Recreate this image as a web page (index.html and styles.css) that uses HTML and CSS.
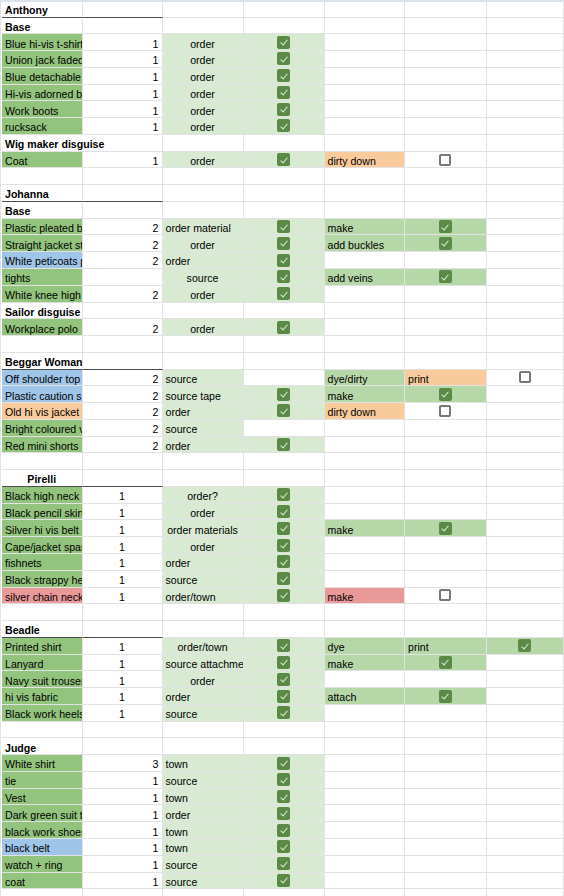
FILE: index.html
```html
<!DOCTYPE html>
<html lang="en">
<head>
  <meta charset="UTF-8" />
  <meta name="viewport" content="width=device-width, initial-scale=1.0" />
  <title>Costume list</title>
  <link rel="stylesheet" href="styles.css">
</head>

<body>
  <div class="sheet">
    <!-- Anthony -->
    <div class="row top"><span class="b hd">Anthony</span><span class="hd"></span><span></span><span></span><span></span><span></span><span></span></div>
    <div class="row"><span class="b">Base</span><span></span><span></span><span></span><span></span><span></span><span></span></div>
    <div class="row"><span class="g1">Blue hi-vis t-shirt</span><span class="r">1</span><span class="g2 c">order</span><span class="g2 ck"><b class="box on"></b></span><span></span><span></span><span></span></div>
    <div class="row"><span class="g1">Union jack faded</span><span class="r">1</span><span class="g2 c">order</span><span class="g2 ck"><b class="box on"></b></span><span></span><span></span><span></span></div>
    <div class="row"><span class="g1">Blue detachable</span><span class="r">1</span><span class="g2 c">order</span><span class="g2 ck"><b class="box on"></b></span><span></span><span></span><span></span></div>
    <div class="row"><span class="g1">Hi-vis adorned b</span><span class="r">1</span><span class="g2 c">order</span><span class="g2 ck"><b class="box on"></b></span><span></span><span></span><span></span></div>
    <div class="row"><span class="g1">Work boots</span><span class="r">1</span><span class="g2 c">order</span><span class="g2 ck"><b class="box on"></b></span><span></span><span></span><span></span></div>
    <div class="row"><span class="g1">rucksack</span><span class="r">1</span><span class="g2 c">order</span><span class="g2 ck"><b class="box on"></b></span><span></span><span></span><span></span></div>
    <div class="row"><span class="b w2">Wig maker disguise</span><span></span><span></span><span></span><span></span><span></span></div>
    <div class="row"><span class="g1">Coat</span><span class="r">1</span><span class="g2 c">order</span><span class="g2 ck"><b class="box on"></b></span><span class="or">dirty down</span><span class="ck"><b class="box"></b></span><span></span></div>
    <div class="row"><span></span><span></span><span></span><span></span><span></span><span></span><span></span></div>

    <!-- Johanna -->
    <div class="row"><span class="b hd">Johanna</span><span class="hd"></span><span></span><span></span><span></span><span></span><span></span></div>
    <div class="row"><span class="b">Base</span><span></span><span></span><span></span><span></span><span></span><span></span></div>
    <div class="row"><span class="g1">Plastic pleated b</span><span class="r">2</span><span class="g2">order material</span><span class="g2 ck"><b class="box on"></b></span><span class="g3">make</span><span class="g3 ck"><b class="box on"></b></span><span></span></div>
    <div class="row"><span class="g1">Straight jacket st</span><span class="r">2</span><span class="g2 c">order</span><span class="g2 ck"><b class="box on"></b></span><span class="g3">add buckles</span><span class="g3 ck"><b class="box on"></b></span><span></span></div>
    <div class="row"><span class="bl">White peticoats p</span><span class="r">2</span><span class="g2">order</span><span class="g2 ck"><b class="box on"></b></span><span></span><span></span><span></span></div>
    <div class="row"><span class="g1">tights</span><span></span><span class="g2 c">source</span><span class="g2 ck"><b class="box on"></b></span><span class="g3">add veins</span><span class="g3 ck"><b class="box on"></b></span><span></span></div>
    <div class="row"><span class="g1">White knee high</span><span class="r">2</span><span class="g2 c">order</span><span class="g2 ck"><b class="box on"></b></span><span></span><span></span><span></span></div>
    <div class="row"><span class="b">Sailor disguise</span><span></span><span></span><span></span><span></span><span></span><span></span></div>
    <div class="row"><span class="g1">Workplace polo</span><span class="r">2</span><span class="g2 c">order</span><span class="g2 ck"><b class="box on"></b></span><span></span><span></span><span></span></div>
    <div class="row"><span></span><span></span><span></span><span></span><span></span><span></span><span></span></div>

    <!-- Beggar Woman -->
    <div class="row"><span class="b hd">Beggar Woman</span><span class="hd"></span><span></span><span></span><span></span><span></span><span></span></div>
    <div class="row"><span class="bl">Off shoulder top</span><span class="r">2</span><span class="g2">source</span><span></span><span class="g3">dye/dirty</span><span class="or">print</span><span class="ck"><b class="box"></b></span></div>
    <div class="row"><span class="bl">Plastic caution s</span><span class="r">2</span><span class="g2">source tape</span><span class="g2 ck"><b class="box on"></b></span><span class="g3">make</span><span class="g3 ck"><b class="box on"></b></span><span></span></div>
    <div class="row"><span class="or">Old hi vis jacket</span><span class="r">2</span><span class="g2">order</span><span class="g2 ck"><b class="box on"></b></span><span class="or">dirty down</span><span class="ck"><b class="box"></b></span><span></span></div>
    <div class="row"><span class="g1">Bright coloured v</span><span class="r">2</span><span class="g2">source</span><span></span><span></span><span></span><span></span></div>
    <div class="row"><span class="g1">Red mini shorts</span><span class="r">2</span><span class="g2">order</span><span class="g2 ck"><b class="box on"></b></span><span></span><span></span><span></span></div>
    <div class="row"><span></span><span></span><span></span><span></span><span></span><span></span><span></span></div>

    <!-- Pirelli -->
    <div class="row"><span class="b c hd">Pirelli</span><span class="hd"></span><span></span><span></span><span></span><span></span><span></span></div>
    <div class="row"><span class="g1">Black high neck</span><span class="c">1</span><span class="g2 c">order?</span><span class="g2 ck"><b class="box on"></b></span><span></span><span></span><span></span></div>
    <div class="row"><span class="g1">Black pencil skirt</span><span class="c">1</span><span class="g2 c">order</span><span class="g2 ck"><b class="box on"></b></span><span></span><span></span><span></span></div>
    <div class="row"><span class="g1">Silver hi vis belt</span><span class="c">1</span><span class="g2 c">order materials</span><span class="g2 ck"><b class="box on"></b></span><span class="g3">make</span><span class="g3 ck"><b class="box on"></b></span><span></span></div>
    <div class="row"><span class="g1">Cape/jacket spare</span><span class="c">1</span><span class="g2 c">order</span><span class="g2 ck"><b class="box on"></b></span><span></span><span></span><span></span></div>
    <div class="row"><span class="g1">fishnets</span><span class="c">1</span><span class="g2">order</span><span class="g2 ck"><b class="box on"></b></span><span></span><span></span><span></span></div>
    <div class="row"><span class="g1">Black strappy heels</span><span class="c">1</span><span class="g2">source</span><span class="g2 ck"><b class="box on"></b></span><span></span><span></span><span></span></div>
    <div class="row"><span class="rd">silver chain necklace</span><span class="c">1</span><span class="g2">order/town</span><span class="g2 ck"><b class="box on"></b></span><span class="rd">make</span><span class="ck"><b class="box"></b></span><span></span></div>
    <div class="row"><span></span><span></span><span></span><span></span><span></span><span></span><span></span></div>

    <!-- Beadle -->
    <div class="row"><span class="b hd">Beadle</span><span class="hd"></span><span></span><span></span><span></span><span></span><span></span></div>
    <div class="row"><span class="g1">Printed shirt</span><span class="c">1</span><span class="g2 c">order/town</span><span class="g2 ck"><b class="box on"></b></span><span class="g3">dye</span><span class="g3">print</span><span class="g3 ck"><b class="box on"></b></span></div>
    <div class="row"><span class="g1">Lanyard</span><span class="c">1</span><span class="g2">source attachment</span><span class="g2 ck"><b class="box on"></b></span><span class="g3">make</span><span class="g3 ck"><b class="box on"></b></span><span></span></div>
    <div class="row"><span class="g1">Navy suit trousers</span><span class="c">1</span><span class="g2 c">order</span><span class="g2 ck"><b class="box on"></b></span><span></span><span></span><span></span></div>
    <div class="row"><span class="g1">hi vis fabric</span><span class="c">1</span><span class="g2">order</span><span class="g2 ck"><b class="box on"></b></span><span class="g3">attach</span><span class="g3 ck"><b class="box on"></b></span><span></span></div>
    <div class="row"><span class="g1">Black work heels</span><span class="c">1</span><span class="g2">source</span><span class="g2 ck"><b class="box on"></b></span><span></span><span></span><span></span></div>
    <div class="row"><span></span><span></span><span></span><span></span><span></span><span></span><span></span></div>

    <!-- Judge -->
    <div class="row"><span class="b">Judge</span><span></span><span></span><span></span><span></span><span></span><span></span></div>
    <div class="row"><span class="g1">White shirt</span><span class="r">3</span><span class="g2">town</span><span class="g2 ck"><b class="box on"></b></span><span></span><span></span><span></span></div>
    <div class="row"><span class="g1">tie</span><span class="r">1</span><span class="g2">source</span><span class="g2 ck"><b class="box on"></b></span><span></span><span></span><span></span></div>
    <div class="row"><span class="g1">Vest</span><span class="r">1</span><span class="g2">town</span><span class="g2 ck"><b class="box on"></b></span><span></span><span></span><span></span></div>
    <div class="row"><span class="g1">Dark green suit trousers</span><span class="r">1</span><span class="g2">order</span><span class="g2 ck"><b class="box on"></b></span><span></span><span></span><span></span></div>
    <div class="row"><span class="g1">black work shoes</span><span class="r">1</span><span class="g2">town</span><span class="g2 ck"><b class="box on"></b></span><span></span><span></span><span></span></div>
    <div class="row"><span class="bl">black belt</span><span class="r">1</span><span class="g2">town</span><span class="g2 ck"><b class="box on"></b></span><span></span><span></span><span></span></div>
    <div class="row"><span class="g1">watch + ring</span><span class="r">1</span><span class="g2">source</span><span class="g2 ck"><b class="box on"></b></span><span></span><span></span><span></span></div>
    <div class="row"><span class="g1">coat</span><span class="r">1</span><span class="g2">source</span><span class="g2 ck"><b class="box on"></b></span><span></span><span></span><span></span></div>
    <div class="row"><span></span><span></span><span></span><span></span><span></span><span></span><span></span></div>
  </div>
</body>
</html>
```

FILE: styles.css
```css
* {
  box-sizing: border-box;
}

body {
  margin: 0;
  background: #fff;
  color: #000;
  font-family: "Liberation Sans", Arial, sans-serif;
  font-size: 10.6px;
  overflow: hidden;
}

.sheet {
  border-top: 2px solid #dde3ea;
  border-left: 1px solid #e2e2e2;
  padding-left: 1px;
}

.row {
  display: grid;
  grid-template-columns: 80.5px 80px 81px 81px 80.5px 81.5px 1fr;
  height: 16.77px;
}

.row.top {
  height: 15.5px;
}

.row > span {
  display: flex;
  align-items: flex-end;
  min-width: 0;
  padding: 0 3px 0.5px;
  line-height: 12px;
  white-space: nowrap;
  overflow: hidden;
  border-right: 1px solid #e2e2e2;
  border-bottom: 1px solid #e2e2e2;
}

.row > span.b {
  font-weight: bold;
}

.row > span.r {
  justify-content: flex-end;
}

.row > span.c {
  justify-content: center;
}

.row > span.w2 {
  grid-column: span 2;
}

.row > span.hd {
  border-bottom-color: #4a4a4a;
}

/* cell fills */
.g1 { background: #93c47d; }
.g2 { background: #d9ead3; }
.g3 { background: #b6d7a8; }
.bl { background: #9fc5e8; }
.or { background: #f9cb9c; }
.rd { background: #ea9999; }

/* checkboxes */
.row > span.ck {
  justify-content: center;
  align-items: center;
  padding: 0;
}

.box {
  display: block;
  width: 12px;
  height: 12px;
  border: 2px solid #777;
  border-radius: 2px;
  background: #fff;
}

.box.on {
  width: 13px;
  height: 13px;
  border: none;
  background: #5b8a46;
  position: relative;
}

.box.on::after {
  content: "";
  position: absolute;
  left: 4.5px;
  top: 2.5px;
  width: 3px;
  height: 6px;
  border-right: 1.4px solid #dfeada;
  border-bottom: 1.4px solid #dfeada;
  transform: rotate(40deg);
}
```
